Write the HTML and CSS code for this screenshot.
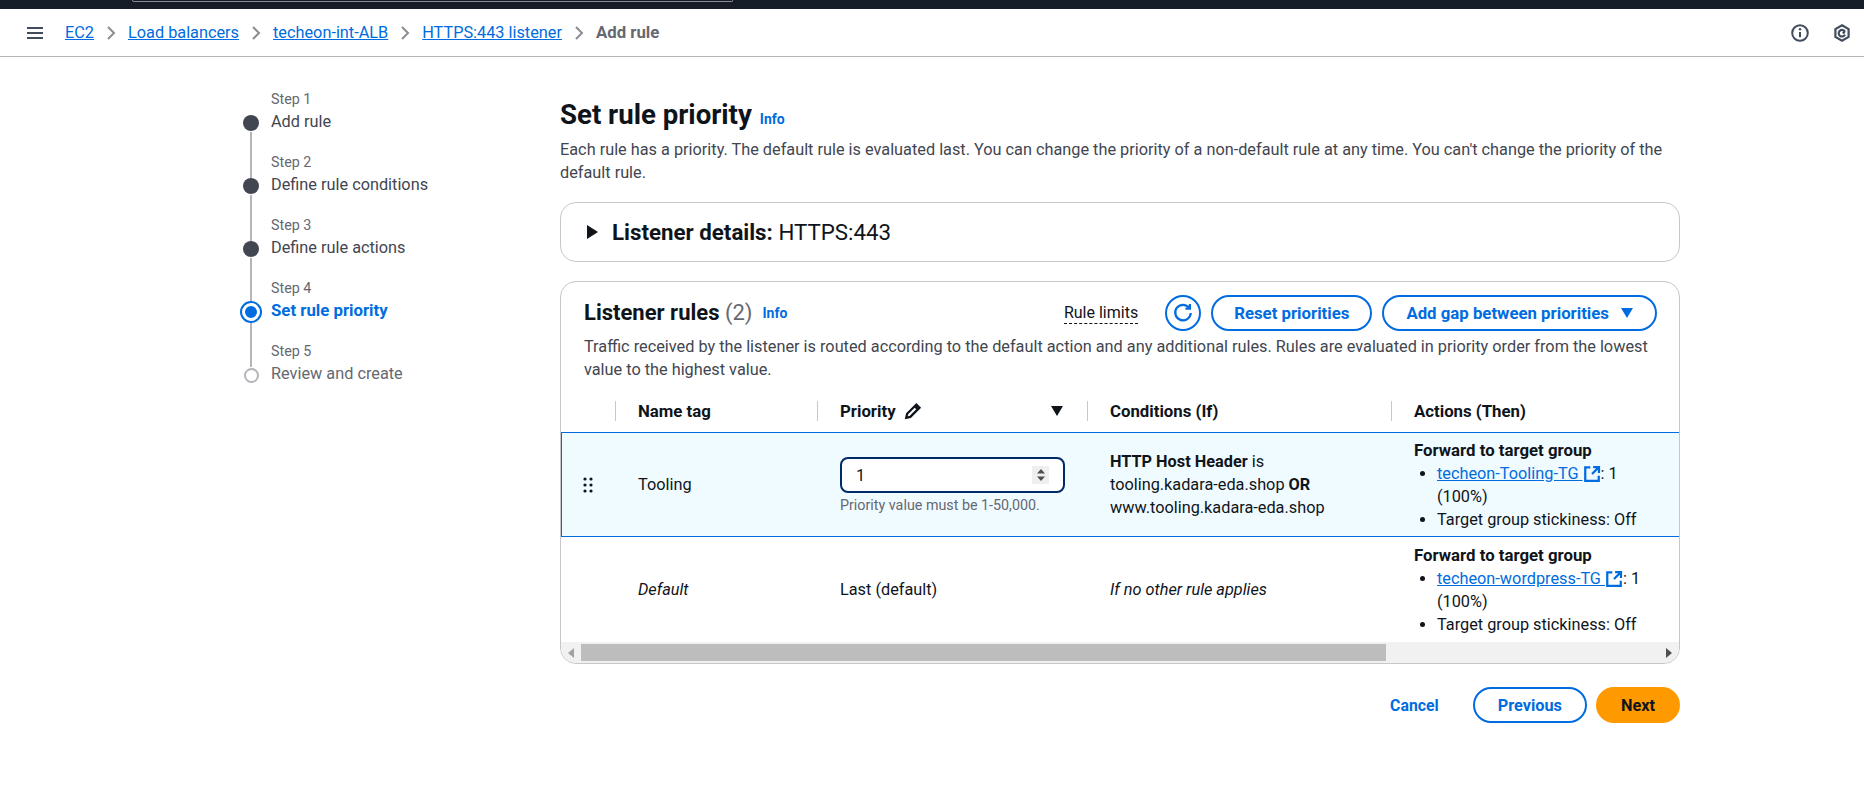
FILE: index.html

```html
<!DOCTYPE html>
<html lang="en">
<head>
  <meta charset="UTF-8">
  <title>Add rule</title>
  <link rel="stylesheet" href="styles.css">
</head>
<body>
  <div class="topbar"><div class="search"></div></div>

  <nav class="crumbs">
    <svg class="burger" width="16" height="14" viewBox="0 0 16 14"><path d="M0 2h16M0 7h16M0 12h16" stroke="#414d5c" stroke-width="2"/></svg>
    <a href="#">EC2</a>
    <svg class="chev" width="10" height="16" viewBox="0 0 10 16"><path d="M2 2l6 6-6 6" fill="none" stroke="#8c8c94" stroke-width="2"/></svg>
    <a href="#">Load balancers</a>
    <svg class="chev" width="10" height="16" viewBox="0 0 10 16"><path d="M2 2l6 6-6 6" fill="none" stroke="#8c8c94" stroke-width="2"/></svg>
    <a href="#">techeon-int-ALB</a>
    <svg class="chev" width="10" height="16" viewBox="0 0 10 16"><path d="M2 2l6 6-6 6" fill="none" stroke="#8c8c94" stroke-width="2"/></svg>
    <a href="#">HTTPS:443 listener</a>
    <svg class="chev" width="10" height="16" viewBox="0 0 10 16"><path d="M2 2l6 6-6 6" fill="none" stroke="#8c8c94" stroke-width="2"/></svg>
    <span class="crumb-current">Add rule</span>
    <div class="crumb-icons">
      <svg width="18" height="18" viewBox="0 0 18 18"><circle cx="9" cy="9" r="7.800" fill="none" stroke="#414d5c" stroke-width="2"/><path d="M9 8v5.200" stroke="#414d5c" stroke-width="2"/><circle cx="9" cy="5.200" r="1.200" fill="#414d5c"/></svg>
      <svg width="18" height="18" viewBox="0 0 18 18"><path d="M9 1.300l6.600 3.800v7.800L9 16.700l-6.600-3.800V5.100z" fill="none" stroke="#414d5c" stroke-width="2.200"/><path d="M12 7.800A3.300 3.300 0 1 0 12 10.600" fill="none" stroke="#414d5c" stroke-width="2.200"/><circle cx="10.800" cy="8.600" r="1.400" fill="#414d5c"/></svg>
    </div>
  </nav>

  <div class="page">
    <ol class="steps">
      <li class="step done"><small>Step 1</small><i class="dot"></i><span>Add rule</span></li>
      <li class="step done"><small>Step 2</small><i class="dot"></i><span>Define rule conditions</span></li>
      <li class="step done"><small>Step 3</small><i class="dot"></i><span>Define rule actions</span></li>
      <li class="step active"><small>Step 4</small><i class="dot"></i><span>Set rule priority</span></li>
      <li class="step todo"><small>Step 5</small><i class="dot"></i><span>Review and create</span></li>
    </ol>

    <main class="content">
      <div class="title-row">
        <h1>Set rule priority</h1>
        <a class="info" href="#">Info</a>
      </div>
      <p class="desc">Each rule has a priority. The default rule is evaluated last. You can change the priority of a non-default rule at any time. You can't change the priority of the default rule.</p>

      <section class="card details">
        <svg width="12" height="14" viewBox="0 0 12 14"><path d="M1 0l11 7-11 7z" fill="#0f141a"/></svg>
        <h2><b>Listener details:</b> HTTPS:443</h2>
      </section>

      <section class="card rules">
        <div class="rules-head">
          <h3>Listener rules <em>(2)</em></h3>
          <a class="info" href="#">Info</a>
          <span class="limits">Rule limits</span>
          <button class="btn round" aria-label="Refresh">
            <svg width="20" height="20" viewBox="0 0 18 18"><path d="M14.600 4.400A7 7 0 1 0 16 9" fill="none" stroke="#006ce0" stroke-width="2"/><path d="M15.200 1v4h-4" fill="none" stroke="#006ce0" stroke-width="2"/></svg>
          </button>
          <button class="btn reset">Reset priorities</button>
          <button class="btn">Add gap between priorities
            <svg width="12" height="10" viewBox="0 0 12 10"><path d="M0 0h12L6 10z" fill="#006ce0"/></svg>
          </button>
        </div>
        <p class="rules-desc">Traffic received by the listener is routed according to the default action and any additional rules. Rules are evaluated in priority order from the lowest value to the highest value.</p>

        <div class="tr thead">
          <div></div>
          <div class="th">Name tag</div>
          <div class="th">Priority
            <svg width="18" height="18" viewBox="0 0 16 16"><path d="M2 14l.8-3.600L11 2.200 13.800 5l-8.200 8.200zM9.500 3.700l2.800 2.800" fill="none" stroke="#0f141a" stroke-width="2"/></svg>
            <svg class="sort" width="12" height="10" viewBox="0 0 12 10"><path d="M0 0h12L6 10z" fill="#0f141a"/></svg>
          </div>
          <div class="th">Conditions (If)</div>
          <div class="th">Actions (Then)</div>
        </div>

        <div class="tr row selected">
          <div class="drag">
            <svg width="10" height="16" viewBox="0 0 10 16" fill="#0f141a"><circle cx="2" cy="2" r="1.600"/><circle cx="8" cy="2" r="1.600"/><circle cx="2" cy="8" r="1.600"/><circle cx="8" cy="8" r="1.600"/><circle cx="2" cy="14" r="1.600"/><circle cx="8" cy="14" r="1.600"/></svg>
          </div>
          <div>Tooling</div>
          <div class="prio">
            <div class="input">1
              <span class="spin">
                <svg width="8" height="14" viewBox="0 0 8 14" fill="#4f4f4f"><path d="M4 1l4 4.500H0zM4 13l4-4.500H0z"/></svg>
              </span>
            </div>
            <small>Priority value must be 1-50,000.</small>
          </div>
          <div><b>HTTP Host Header</b> is<br>tooling.kadara-eda.shop <b>OR</b><br>www.tooling.kadara-eda.shop</div>
          <div class="action">
            <b>Forward to target group</b>
            <ul>
              <li><a href="#">techeon-Tooling-TG <svg width="18" height="18" viewBox="0 0 16 16"><path d="M6.500 2H2v12h12V9.500M9 1.800h5.200V7M14 2L8 8" fill="none" stroke="#006ce0" stroke-width="2"/></svg></a>: 1 (100%)</li>
              <li>Target group stickiness: Off</li>
            </ul>
          </div>
        </div>

        <div class="tr row">
          <div></div>
          <div><em>Default</em></div>
          <div>Last (default)</div>
          <div><em>If no other rule applies</em></div>
          <div class="action">
            <b>Forward to target group</b>
            <ul>
              <li><a href="#">techeon-wordpress-TG <svg width="18" height="18" viewBox="0 0 16 16"><path d="M6.500 2H2v12h12V9.500M9 1.800h5.200V7M14 2L8 8" fill="none" stroke="#006ce0" stroke-width="2"/></svg></a>: 1 (100%)</li>
              <li>Target group stickiness: Off</li>
            </ul>
          </div>
        </div>

        <div class="scrollbar">
          <svg width="6" height="10" viewBox="0 0 6 10"><path d="M6 0v10L0 5z" fill="#a3a3a3"/></svg>
          <div class="track"><div class="thumb"></div></div>
          <svg width="6" height="10" viewBox="0 0 6 10"><path d="M0 0v10l6-5z" fill="#505050"/></svg>
        </div>
      </section>

      <div class="footer">
        <a class="cancel" href="#">Cancel</a>
        <button class="btn prev">Previous</button>
        <button class="btn next">Next</button>
      </div>
    </main>
  </div>
</body>
</html>
```

FILE: styles.css

```css
* {
  box-sizing: border-box;
}

body {
  margin: 0;
  font-family: Roboto, "Noto Sans", sans-serif;
  font-size: 16.300px;
  line-height: 23px;
  color: #0f141a;
  background: #fff;
}

a {
  color: #006ce0;
}

.topbar {
  height: 9px;
  background: #161d26;
  padding-left: 132px;
}

.search {
  width: 601px;
  height: 2px;
  border: 1px solid #8c8c94;
  border-top: none;
  border-radius: 0 0 4px 4px;
}

.crumbs {
  display: flex;
  align-items: center;
  height: 48px;
  padding: 0 13px 0 27px;
  border-bottom: 1px solid #b4b4bb;
  gap: 12px;
}

.burger {
  margin-right: 10px;
}

.crumb-current {
  font-weight: 700;
  font-size: 16.800px;
  color: #656871;
}

.crumb-icons {
  margin-left: auto;
  display: flex;
  gap: 24px;
}

.page {
  display: flex;
  padding-left: 240px;
}

.steps {
  list-style: none;
  margin: 32px 0 0;
  padding: 0;
  width: 320px;
  flex: none;
}

.step {
  position: relative;
  display: grid;
  grid-template-columns: 22px 1fr;
  column-gap: 9px;
  height: 63px;
  align-items: center;
  grid-template-rows: 20px 24px;
  color: #424650;
}

.step small {
  grid-column: 2;
  font-size: 14.300px;
  color: #656871;
}

.step .dot {
  justify-self: center;
  margin-top: 4px;
  width: 16px;
  height: 16px;
  border-radius: 50%;
  background: #424650;
}

.step::after {
  content: "";
  position: absolute;
  left: 10px;
  top: 43px;
  width: 2px;
  height: 46px;
  background: #b4b4bb;
}

.step:last-child::after {
  display: none;
}

.active span {
  color: #006ce0;
  font-weight: 700;
  font-size: 16.800px;
}

.active .dot {
  width: 22px;
  height: 22px;
  background: #006ce0;
  border: 5px solid #fff;
  outline: 2px solid #006ce0;
  outline-offset: -2px;
  z-index: 1;
}

.todo .dot {
  background: #fff;
  border: 2px solid #b4b4bb;
  width: 15px;
  height: 15px;
}

.todo span {
  color: #656871;
}

.content {
  width: 1120px;
  padding-top: 42px;
}

.title-row {
  display: flex;
  align-items: baseline;
  gap: 8px;
}

h1 {
  margin: 0;
  font-size: 27.600px;
  line-height: 32px;
}

.info {
  font-size: 14px;
  font-weight: 700;
  text-decoration: none;
}

.desc {
  margin: 7px 0 0;
  color: #424650;
}

.card {
  border: 1px solid #c6c6cd;
  border-radius: 16px;
}

.details {
  display: flex;
  align-items: center;
  gap: 14px;
  height: 60px;
  margin-top: 18px;
  padding-left: 25px;
}

h2 {
  margin: 0;
  font-size: 22.300px;
  font-weight: 400;
}

.rules {
  margin-top: 19px;
  height: 383px;
  overflow: hidden;
}

.rules-head {
  display: flex;
  align-items: center;
  gap: 10px;
  padding: 13px 22px 0 23px;
}

h3 {
  margin: 0;
  font-size: 22px;
  line-height: 36px;
}

h3 em {
  font-style: normal;
  font-weight: 400;
  color: #656871;
}

.limits {
  margin-left: auto;
  margin-right: 17px;
  line-height: 20px;
  font-size: 16px;
  border-bottom: 1px dashed #0f141a;
}

.btn {
  display: flex;
  align-items: center;
  gap: 12px;
  height: 36px;
  padding: 0 22px;
  border: 2px solid #006ce0;
  border-radius: 20px;
  background: #fff;
  color: #006ce0;
  font: 700 16.800px Roboto, sans-serif;
}

.reset {
  padding: 0 21px;
}

.round {
  width: 36px;
  padding: 0;
  justify-content: center;
}

.rules-desc {
  margin: 4px 23px 0;
  color: #424650;
}

.tr {
  display: grid;
  grid-template-columns: 54px 202px 270px 304px 260px;
}

.thead {
  height: 42px;
  margin-top: 9px;
  align-items: center;
}

.th {
  display: flex;
  align-items: center;
  gap: 8px;
  height: 20px;
  padding-left: 22px;
  border-left: 1px solid #c6c6cd;
  font-weight: 700;
  font-size: 16.800px;
}

.sort {
  margin-left: auto;
  margin-right: 24px;
}

.row {
  height: 105px;
  align-items: center;
}

.row > div:nth-child(n+2) {
  padding-left: 23px;
}

.selected {
  background: #f0fbff;
  border-top: 1px solid #006ce0;
  border-bottom: 1px solid #006ce0;
  box-shadow: inset 1px 0 0 #006ce0;
}

.drag {
  display: flex;
  padding-left: 22px;
}

.row > .prio {
  padding-top: 3px;
}

.input {
  display: flex;
  align-items: center;
  justify-content: space-between;
  width: 225px;
  height: 36px;
  padding: 0 14px;
  border: 2px solid #002a66;
  border-radius: 8px;
  background: #fff;
}

.spin {
  display: flex;
  align-items: center;
  justify-content: center;
  width: 17px;
  height: 18px;
  background: #efefef;
}

.prio small {
  display: block;
  font-size: 14.300px;
  line-height: 20px;
  color: #656871;
  margin-top: 2px;
}

.action b {
  font-size: 16.800px;
}

.action ul {
  margin: 0;
  padding-left: 23px;
}

.action svg {
  vertical-align: -4px;
}

.scrollbar {
  display: flex;
  align-items: center;
  height: 21px;
  padding: 2px 7px;
  background: #f1f1f1;
}

.track {
  flex: 1;
  height: 17px;
  margin: 0 7px;
}

.thumb {
  width: 805px;
  height: 100%;
  background: #bdbdbd;
}

.footer {
  display: flex;
  align-items: center;
  justify-content: flex-end;
  gap: 9px;
  margin-top: 23px;
}

.footer .btn {
  padding: 0 23px;
  font-size: 16.300px;
}

.cancel {
  font-weight: 700;
  text-decoration: none;
  margin-right: 25px;
  font-size: 15.800px;
}

.next {
  background: #ff9900;
  border-color: #ff9900;
  color: #0f141a;
}
```
